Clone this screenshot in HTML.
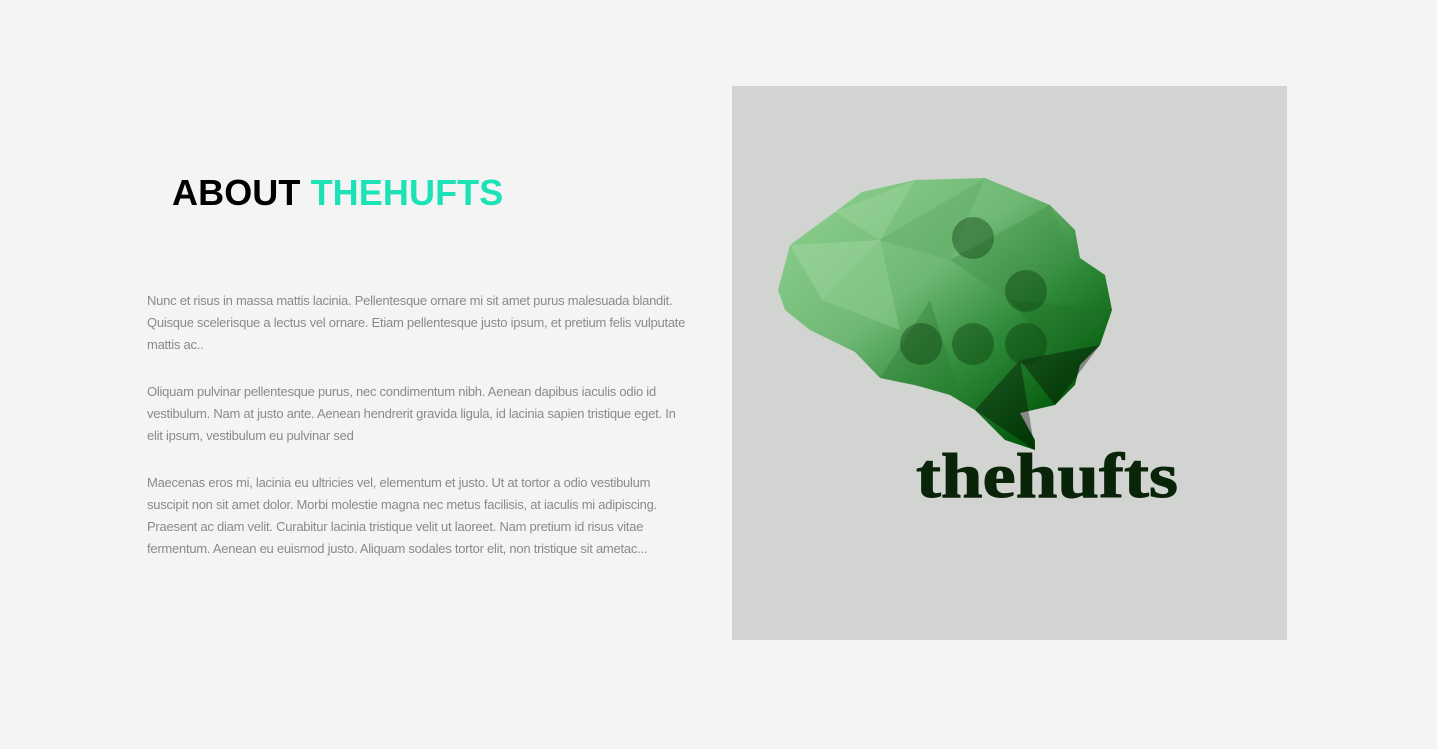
<!DOCTYPE html>
<html><head><style>
body{margin:0;width:1437px;height:749px;background:#f4f4f4;position:relative;overflow:hidden;font-family:"Liberation Sans",sans-serif}
h1{position:absolute;left:172px;top:172px;margin:0;font-size:36px;font-weight:bold;letter-spacing:0.1px;color:#000;white-space:nowrap}
h1 span{color:#1de2b5}
.p{position:absolute;left:147px;font-size:13px;line-height:22px;color:#8a8a8a;white-space:nowrap;letter-spacing:-0.25px}
.img{position:absolute;left:732px;top:86px;width:555px;height:554px;background:#d2d4d1}
</style></head><body>
<h1>ABOUT <span>THEHUFTS</span></h1>
<div class="p" style="top:290px">Nunc et risus in massa mattis lacinia. Pellentesque ornare mi sit amet purus malesuada blandit.<br>Quisque scelerisque a lectus vel ornare. Etiam pellentesque justo ipsum, et pretium felis vulputate<br>mattis ac..</div>
<div class="p" style="top:381px">Oliquam pulvinar pellentesque purus, nec condimentum nibh. Aenean dapibus iaculis odio id<br>vestibulum. Nam at justo ante. Aenean hendrerit gravida ligula, id lacinia sapien tristique eget. In<br>elit ipsum, vestibulum eu pulvinar sed</div>
<div class="p" style="top:472px">Maecenas eros mi, lacinia eu ultricies vel, elementum et justo. Ut at tortor a odio vestibulum<br>suscipit non sit amet dolor. Morbi molestie magna nec metus facilisis, at iaculis mi adipiscing.<br>Praesent ac diam velit. Curabitur lacinia tristique velit ut laoreet. Nam pretium id risus vitae<br>fermentum. Aenean eu euismod justo. Aliquam sodales tortor elit, non tristique sit ametac...</div>
<div class="img"></div>
<svg style="position:absolute;left:0;top:0" width="1437" height="749">
<defs><linearGradient id="g" x1="0" y1="0" x2="1" y2="1">
<stop offset="0" stop-color="#92d292"/><stop offset="0.4" stop-color="#6fb874"/><stop offset="0.62" stop-color="#2e8a38"/><stop offset="0.85" stop-color="#045a0c"/><stop offset="1" stop-color="#022a05"/></linearGradient></defs>
<polygon fill="url(#g)" points="778,290 790,245 835,212 862,192 915,180 985,178 1050,205 1075,230 1080,258 1105,275 1112,310 1100,345 1080,365 1075,385 1055,405 1020,413 1035,440 1035,450 1005,440 975,410 950,395 915,385 880,378 855,352 810,330 785,310"/>
<g opacity="0.35">
<polygon fill="#a6dca6" points="835,212 915,180 880,240"/>
<polygon fill="#5aa660" points="880,240 985,178 950,260"/>
<polygon fill="#b0e0b0" points="790,245 880,240 822,300"/>
<polygon fill="#3f8f45" points="950,260 1050,205 1075,258 1010,300"/>
<polygon fill="#1f6f25" points="1010,300 1112,310 1060,360"/>
<polygon fill="#000" points="975,410 1020,360 1035,450"/>
<polygon fill="#000" points="1020,360 1100,345 1055,405"/>
<polygon fill="#2a7a30" points="880,378 930,300 960,395"/>
<polygon fill="#a0d8a0" points="822,300 880,240 900,330"/>
</g>
<g fill="#0a3a0a" opacity="0.4">
<circle cx="973" cy="238" r="21"/><circle cx="1026" cy="291" r="21"/><circle cx="921" cy="344" r="21"/><circle cx="973" cy="344" r="21"/><circle cx="1026" cy="344" r="21"/>
</g>
<text x="916" y="497" font-family="Liberation Serif,serif" font-weight="bold" font-size="64" fill="#0a240a" stroke="#0a240a" stroke-width="1" textLength="262" lengthAdjust="spacingAndGlyphs">thehufts</text>
</svg>
</body></html>
